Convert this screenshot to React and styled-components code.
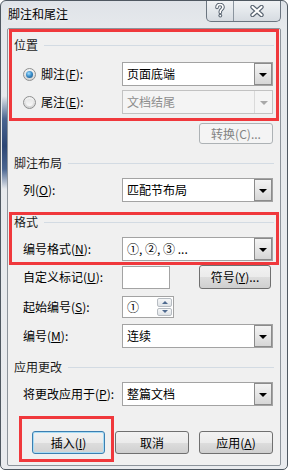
import React from "react";
import styled, { createGlobalStyle, css } from "styled-components";

const GlobalStyle = createGlobalStyle`
  html, body {
    margin: 0;
    padding: 0;
    background: #ffffff;
  }
  * {
    box-sizing: border-box;
  }
  body {
    font-family: "Noto Sans CJK SC", "Noto Sans", "Liberation Sans", sans-serif;
    font-size: 12px;
    color: #000;
  }
`;

const Window = styled.div`
  width: 288px;
  height: 470px;
  border: 1px solid #4f5861;
  border-radius: 6px 6px 5px 5px;
  display: flex;
  flex-direction: column;
  overflow: hidden;
  background:
    linear-gradient(
        to bottom,
        rgba(70, 98, 140, 0) 95px,
        #4a6590 118px,
        #2c4674 145px,
        #4a6590 168px,
        rgba(70, 98, 140, 0) 188px
      )
      1px 0 / 5px 100% no-repeat,
    linear-gradient(to bottom, #dfe3e8 0px, #e6e9ec 28px, #e9ebee 100%);
`;

const TitleBar = styled.div`
  height: 27px;
  display: flex;
  align-items: flex-start;
  flex-shrink: 0;
`;

const Title = styled.div`
  padding: 5px 0 0 7px;
  font-size: 12px;
  line-height: 16px;
  color: #000;
  text-shadow: 0 0 6px rgba(255, 255, 255, 0.9);
`;

const Caption = styled.div`
  margin: -1px 6px 0 auto;
  display: flex;
  border: 1px solid #6b7580;
  border-top: none;
  border-radius: 0 0 5px 5px;
  overflow: hidden;
  background: linear-gradient(to bottom, #f1f3f5 0%, #e4e8ec 50%, #d6dbe1 100%);
`;

const CaptionButton = styled.div`
  width: ${(p) => p.$w}px;
  height: 21px;
  display: flex;
  align-items: center;
  justify-content: center;
  ${(p) =>
    p.$divider &&
    css`
      border-right: 1px solid #8a949e;
    `}
`;

const Client = styled.div`
  flex: 1;
  margin: 0 6px 3px 6px;
  border: 1px solid #8d949b;
  border-radius: 2px;
  background: #f0f0f0;
  display: flex;
  flex-direction: column;
`;

const Highlight = styled.div`
  position: relative;
  margin: 0 1px;
  outline: 3px solid #f0383c;
  outline-offset: -3px;
  padding: ${(p) => p.$pad || "0"};
`;

const GroupHeader = styled.div`
  height: 16px;
  display: flex;
  align-items: center;
  gap: 6px;
  padding: 0 ${(p) => (p.$inset ? 5 : 6)}px 0 ${(p) => (p.$inset ? 5 : 6)}px;
  margin-top: ${(p) => p.$mt || 0}px;
  line-height: 16px;
  color: #1c1c1c;

  &::after {
    content: "";
    flex: 1;
    height: 1px;
    background: #d3dbe3;
  }
`;

const Row = styled.div`
  display: flex;
  align-items: center;
  height: ${(p) => p.$h || 24}px;
  margin-top: ${(p) => p.$mt || 0}px;
  padding: 0 ${(p) => p.$pr ?? 7}px 0 ${(p) => p.$pl ?? 15}px;
`;

const Label = styled.span`
  width: ${(p) => p.$w || 99}px;
  flex-shrink: 0;
  line-height: 16px;
  white-space: nowrap;
  color: ${(p) => (p.$disabled ? "#000" : "#000")};
`;

const RadioDot = styled.span`
  width: 13px;
  height: 13px;
  border-radius: 50%;
  border: 1px solid #8e8f8f;
  background: linear-gradient(to bottom, #f4f4f4, #d4d4d4);
  display: flex;
  align-items: center;
  justify-content: center;
  margin-right: 5px;
  flex-shrink: 0;

  &::after {
    content: "";
    width: 7px;
    height: 7px;
    border-radius: 50%;
    background: ${(p) =>
      p.$checked
        ? "radial-gradient(circle at 40% 35%, #a6e0ff 0%, #3d90cc 45%, #13497a 100%)"
        : "linear-gradient(to bottom, #e6e6e6, #f8f8f8)"};
  }
`;

const Select = styled.div`
  width: 151px;
  height: 24px;
  border: 1px solid ${(p) => (p.$disabled ? "#c2c2c2" : "#a3a3a3")};
  background: ${(p) => (p.$disabled ? "#f4f4f4" : "#ffffff")};
  display: flex;
  align-items: stretch;
`;

const SelectText = styled.span`
  flex: 1;
  padding-left: 4px;
  line-height: 22px;
  color: ${(p) => (p.$disabled ? "#8d8d8d" : "#000")};
  white-space: nowrap;
`;

const DropButton = styled.span`
  width: 18px;
  display: flex;
  align-items: center;
  justify-content: center;
  ${(p) =>
    p.$disabled
      ? css`
          border-left: 1px solid #dadada;
          background: #f4f4f4;
        `
      : css`
          border: 1px solid #8b8b8b;
          margin: 0 0 0 0;
          background: linear-gradient(to bottom, #f3f3f3 0%, #e6e6e6 50%, #d6d6d6 100%);
        `}

  &::after {
    content: "";
    border-left: 4px solid transparent;
    border-right: 4px solid transparent;
    border-top: 4px solid ${(p) => (p.$disabled ? "#a8a8a8" : "#000")};
    margin-top: 1px;
  }
`;

const TextBox = styled.div`
  width: ${(p) => p.$w}px;
  height: ${(p) => p.$h || 23}px;
  border: 1px solid #a3a3a3;
  background: #fff;
  display: flex;
  align-items: stretch;
`;

const SpinText = styled.span`
  flex: 1;
  padding-left: 4px;
  line-height: 20px;
`;

const SpinButtons = styled.span`
  width: 16px;
  display: flex;
  flex-direction: column;
  gap: 1px;
  padding: 1px 1px 1px 0;
`;

const SpinPart = styled.span`
  flex: 1;
  border: 1px solid #b7bcc2;
  border-radius: 2px;
  background: linear-gradient(to bottom, #f6f7f8, #dfe3e7);
  display: flex;
  align-items: center;
  justify-content: center;

  &::after {
    content: "";
    border-left: 3px solid transparent;
    border-right: 3px solid transparent;
    ${(p) =>
      p.$up
        ? css`
            border-bottom: 3px solid #4f6a8f;
          `
        : css`
            border-top: 3px solid #4f6a8f;
          `}
  }
`;

const Button = styled.div`
  width: ${(p) => p.$w || 74}px;
  height: ${(p) => p.$h || 23}px;
  border-radius: 3px;
  display: flex;
  align-items: center;
  justify-content: center;
  line-height: 16px;
  position: relative;
  flex-shrink: 0;
  ${(p) =>
    p.$disabled
      ? css`
          border: 1px solid #adb2b5;
          background: #f4f4f4;
          color: #838383;
        `
      : p.$focused
      ? css`
          border: 1px solid #3c7fb1;
          box-shadow: inset 0 0 0 1px #a7dcf5;
          background: linear-gradient(to bottom, #f2f2f2 0%, #ebebeb 50%, #dddddd 51%, #d2d2d2 100%);
          color: #000;
        `
      : css`
          border: 1px solid #707070;
          background: linear-gradient(to bottom, #f2f2f2 0%, #ebebeb 50%, #dddddd 51%, #cfcfcf 100%);
          color: #000;
        `}
`;

const ButtonMark = styled.span`
  position: absolute;
  top: -16px;
  left: -14px;
  right: -10px;
  bottom: -9px;
  border: 3px solid #f0383c;
  pointer-events: none;
`;

const ConvertRow = styled.div`
  display: flex;
  justify-content: flex-end;
  padding-right: 7px;
  margin-top: 2px;
`;

const SymbolButton = styled(Button)`
  margin-left: auto;
`;

const ActionRow = styled.div`
  display: flex;
  gap: 10px;
  margin-top: 25px;
  padding-left: 24px;
`;

const HelpIcon = () => (
  <svg width="12" height="15" viewBox="0 0 12 15">
    <path
      d="M3 4.5 C3 2 4.5 1.5 6 1.5 C7.8 1.5 9 2.6 9 4.2 C9 6.2 6.3 6.4 6.3 8.6 L6.3 9.4"
      fill="none"
      stroke="#5a6572"
      strokeWidth="3.6"
      strokeLinecap="round"
    />
    <path
      d="M3 4.5 C3 2 4.5 1.5 6 1.5 C7.8 1.5 9 2.6 9 4.2 C9 6.2 6.3 6.4 6.3 8.6 L6.3 9.4"
      fill="none"
      stroke="#ffffff"
      strokeWidth="1.6"
      strokeLinecap="round"
    />
    <circle cx="6.3" cy="12.6" r="1.9" fill="#5a6572" />
    <circle cx="6.3" cy="12.6" r="0.9" fill="#ffffff" />
  </svg>
);

const CloseIcon = () => (
  <svg width="14" height="12" viewBox="0 0 14 12">
    <path d="M2.5 2 L11.5 10 M11.5 2 L2.5 10" stroke="#5a6572" strokeWidth="4.4" strokeLinecap="round" />
    <path d="M2.5 2 L11.5 10 M11.5 2 L2.5 10" stroke="#ffffff" strokeWidth="2.2" strokeLinecap="round" />
  </svg>
);

const Combo = ({ value, disabled }) => (
  <Select $disabled={disabled}>
    <SelectText $disabled={disabled}>{value}</SelectText>
    <DropButton $disabled={disabled} />
  </Select>
);

const FieldRow = ({ label, mnemonic, children, mt }) => (
  <Row $mt={mt}>
    <Label>
      {label}(<u>{mnemonic}</u>):
    </Label>
    {children}
  </Row>
);

export default function App() {
  return (
    <>
      <GlobalStyle />
      <Window>
        <TitleBar>
          <Title>脚注和尾注</Title>
          <Caption>
            <CaptionButton $w={27} $divider>
              <HelpIcon />
            </CaptionButton>
            <CaptionButton $w={46}>
              <CloseIcon />
            </CaptionButton>
          </Caption>
        </TitleBar>

        <Client>
          <Highlight $pad="8px 0 7px 0">
            <GroupHeader $inset>位置</GroupHeader>
            <Row $mt={9} $pl={14} $pr={6}>
              <RadioDot $checked />
              <Label $w={81}>
                脚注(<u>F</u>):
              </Label>
              <Combo value="页面底端" />
            </Row>
            <Row $mt={4} $pl={14} $pr={6}>
              <RadioDot />
              <Label $w={81}>
                尾注(<u>E</u>):
              </Label>
              <Combo value="文档结尾" disabled />
            </Row>
          </Highlight>

          <ConvertRow>
            <Button $disabled $w={74} $h={21}>
              转换(C)...
            </Button>
          </ConvertRow>

          <GroupHeader $mt={11}>脚注布局</GroupHeader>
          <FieldRow label="列" mnemonic="O" mt={7}>
            <Combo value="匹配节布局" />
          </FieldRow>

          <Highlight $pad="2px 0 4px 0" style={{ marginTop: 10 }}>
            <GroupHeader $inset>格式</GroupHeader>
            <Row $mt={7} $pl={14} $pr={6}>
              <Label>
                编号格式(<u>N</u>):
              </Label>
              <Combo value="①, ②, ③ ..." />
            </Row>
          </Highlight>

          <Row $pr={9}>
            <Label>
              自定义标记(<u>U</u>):
            </Label>
            <TextBox $w={48} />
            <SymbolButton $w={72} $h={24}>
              符号(<u>Y</u>)...
            </SymbolButton>
          </Row>

          <FieldRow label="起始编号" mnemonic="S" mt={6}>
            <TextBox $w={52} $h={22}>
              <SpinText>①</SpinText>
              <SpinButtons>
                <SpinPart $up />
                <SpinPart />
              </SpinButtons>
            </TextBox>
          </FieldRow>

          <FieldRow label="编号" mnemonic="M" mt={5}>
            <Combo value="连续" />
          </FieldRow>

          <GroupHeader $mt={11}>应用更改</GroupHeader>
          <FieldRow label="将更改应用于" mnemonic="P" mt={7}>
            <Combo value="整篇文档" />
          </FieldRow>

          <ActionRow>
            <Button $focused $w={73}>
              插入(<u>I</u>)
              <ButtonMark />
            </Button>
            <Button>取消</Button>
            <Button>
              应用(<u>A</u>)
            </Button>
          </ActionRow>
        </Client>
      </Window>
    </>
  );
}
